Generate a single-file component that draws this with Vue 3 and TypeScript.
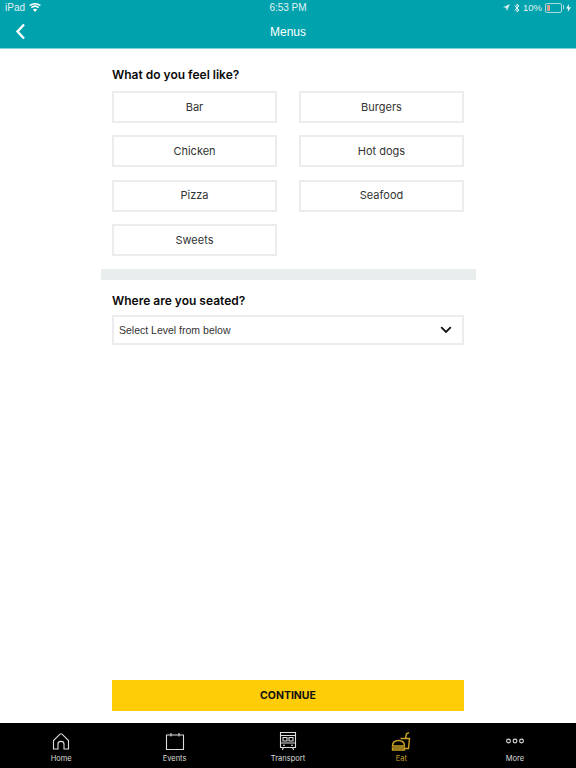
<script setup lang="ts">
const foods: string[] = ['Bar', 'Burgers', 'Chicken', 'Hot dogs', 'Pizza', 'Seafood', 'Sweets']
const tabs = ['Home', 'Events', 'Transport', 'Eat', 'More']
</script>

<template>
  <div class="page">
    <header class="top">
      <div class="status">
        <div class="status-left">
          <span>iPad</span>
          <svg width="12" height="9" viewBox="0 0 12 9"><path d="M6 9 L3.9 6.4 Q6 5 8.1 6.4Z M2.9 5.2 L1.8 3.9 Q6 0.8 10.2 3.9 L9.1 5.2 Q6 3 2.9 5.2Z M1.1 3.1 L0 1.9 Q6 -1.9 12 1.9 L10.9 3.1 Q6 -0.1 1.1 3.1Z" fill="#fff"/></svg>
        </div>
        <span class="clock">6:53 PM</span>
        <div class="status-right">
          <svg width="7" height="7" viewBox="0 0 8 8"><path d="M8 0 L4.4 8 L3.6 4.4 L0 3.6Z" fill="#d8eef0"/></svg>
          <svg class="bt" width="6" height="10" viewBox="0 0 6 10"><path d="M0.5 2.5 L5 7 L3 9 V1 L5 3 L0.5 7.5" fill="none" stroke="#e2f3f4"/></svg>
          <span class="pct">10%</span>
          <span class="battery"><i></i></span>
          <svg class="bolt" width="5" height="8" viewBox="0 0 5 8"><path d="M3 0 L0 4.6 H2 L1.8 8 L5 3.2 H2.8Z" fill="#e2f3f4"/></svg>
        </div>
      </div>
      <div class="nav">
        <svg class="back" width="11" height="17" viewBox="0 0 11 17"><path d="M9 1.5 L2.5 8.5 L9 15.5" fill="none" stroke="#fff" stroke-width="2.4"/></svg>
        <span>Menus</span>
      </div>
    </header>

    <main class="main">
      <section class="panel first">
        <h2>What do you feel like?</h2>
        <div class="grid">
          <button v-for="f in foods" :key="f" class="opt">{{ f }}</button>
        </div>
      </section>
      <div class="sep"></div>
      <section class="panel second">
        <h2>Where are you seated?</h2>
        <div class="select">
          <span>Select Level from below</span>
          <svg width="12" height="8" viewBox="0 0 12 8"><path d="M1.2 1.2 L6 6 L10.8 1.2" fill="none" stroke="#111" stroke-width="1.8"/></svg>
        </div>
      </section>
      <button class="cta">CONTINUE</button>
    </main>

    <footer class="tabs">
      <div v-for="t in tabs" :key="t" class="tab" :class="{ on: t === 'Eat' }">
        <svg width="24" height="24" viewBox="0 0 24 24" fill="none" stroke="currentColor" stroke-width="1.1">
          <template v-if="t === 'Home'">
            <path d="M4.5 20 H9 V15 Q9 12.4 12 12.4 Q15 12.4 15 15 V20 H19.5 V11.5 L13 5.2 Q12 4.3 11 5.2 L4.5 11.5Z"/>
          </template>
          <template v-else-if="t === 'Events'">
            <path d="M3.5 6 H20.5 V20.5 H3.5Z M8 4 V7.5 M16 4 V7.5"/>
          </template>
          <template v-else-if="t === 'Transport'">
            <path d="M4.5 3.5 H19.5 V18.5 H4.5Z M4.5 6.5 H19.5 M4.5 14 H19.5 M7 8.5 H11 V12 H7Z M13 8.5 H17 V12 H13Z M7 16.2 H9 M15 16.2 H17 M7.5 18.5 L6.3 21 M16.5 18.5 L17.7 21"/>
          </template>
          <template v-else-if="t === 'Eat'">
            <g stroke-width="1.4">
              <path d="M3.5 17 Q3.5 11.5 9.5 11.5 Q15.5 11.5 15.5 17Z M3.5 19 H15.5 V21 H3.5Z"/>
              <path d="M11.5 9.5 H20.5 L19.5 19.5 H15.5 M16.5 9.5 L17.5 4.8 L20 3.6"/>
            </g>
          </template>
          <template v-else>
            <circle cx="5.5" cy="12" r="1.9"/><circle cx="12" cy="12" r="1.9"/><circle cx="18.5" cy="12" r="1.9"/>
          </template>
        </svg>
        <span>{{ t }}</span>
      </div>
    </footer>
  </div>
</template>

<style>
body { margin: 0; }
</style>

<style scoped>
.page { width: 576px; height: 768px; display: flex; flex-direction: column; background: #fff; font-family: "Liberation Sans", Arial, sans-serif; overflow: hidden; }
.top { background: #00a2ad; color: #fff; height: 49px; flex: none; border-bottom: 1px solid #7fd0d6; box-sizing: border-box; }
.status { height: 15px; padding: 0 5px; display: flex; align-items: center; justify-content: space-between; font-size: 10px; color: #e2f3f4; position: relative; }
.status-left, .status-right { display: flex; align-items: center; gap: 4px; }
.status-right { gap: 4px; }
.pct { font-size: 9.5px; margin-right: -1px; margin-left: -1px; }
.clock { position: absolute; left: 0; right: 0; text-align: center; }
.battery { width: 13px; height: 6px; border: 1px solid #a9dade; border-radius: 2px; display: block; padding: 1px; box-sizing: content-box; position: relative; }
.battery::after { content: ""; position: absolute; right: -3px; top: 1px; width: 1.5px; height: 4px; background: #a9dade; }
.battery i { display: block; width: 3px; height: 100%; background: #d9a08e; }
.bolt { margin-left: 0; }
.nav { height: 33px; display: flex; align-items: center; justify-content: center; font-size: 12px; position: relative; }
.back { position: absolute; left: 15px; top: 8px; }
.main { flex: 1; display: flex; flex-direction: column; align-items: center; min-height: 0; }
.panel { width: 352px; }
h2 { margin: 0; font-family: Inter, Lato, sans-serif; font-weight: 600; font-size: 12px; line-height: 16px; color: #0a0a0a; }
.first { padding-top: 18px; }
.grid { display: grid; grid-template-columns: 165px 165px; column-gap: 22px; row-gap: 12.4px; grid-auto-rows: 32px; margin-top: 8px; }
.opt { height: 32px; background: #fff; border: 2px solid #ececec; font-family: Inter, Lato, sans-serif; font-size: 11px; color: #333; padding: 0 0 1px; }
.sep { width: 375px; height: 11px; background: #e9eded; margin-top: 13px; flex: none; }
.second { padding-top: 13px; }
.select { margin-top: 6px; height: 30px; box-sizing: border-box; border: 2px solid #ececec; display: flex; align-items: center; justify-content: space-between; padding: 0 5px; font-size: 10.5px; color: #333; }
.select svg { margin-right: 5px; }
.cta { margin-top: auto; margin-bottom: 12px; width: 352px; height: 31px; background: #ffcc08; border: 0; font-family: Inter, Lato, sans-serif; font-weight: 700; font-size: 10.5px; color: #111; padding: 0; }
.tabs { height: 45px; flex: none; background: #000; display: flex; padding: 0 4.5px; box-sizing: border-box; }
.tab { flex: 1; display: flex; flex-direction: column; align-items: center; color: #ddd; font-size: 7.5px; font-family: Inter, Lato, sans-serif; padding-top: 6px; }
.tab svg { display: block; margin-bottom: 1px; }
.tab.on { color: #c9a227; }
</style>
